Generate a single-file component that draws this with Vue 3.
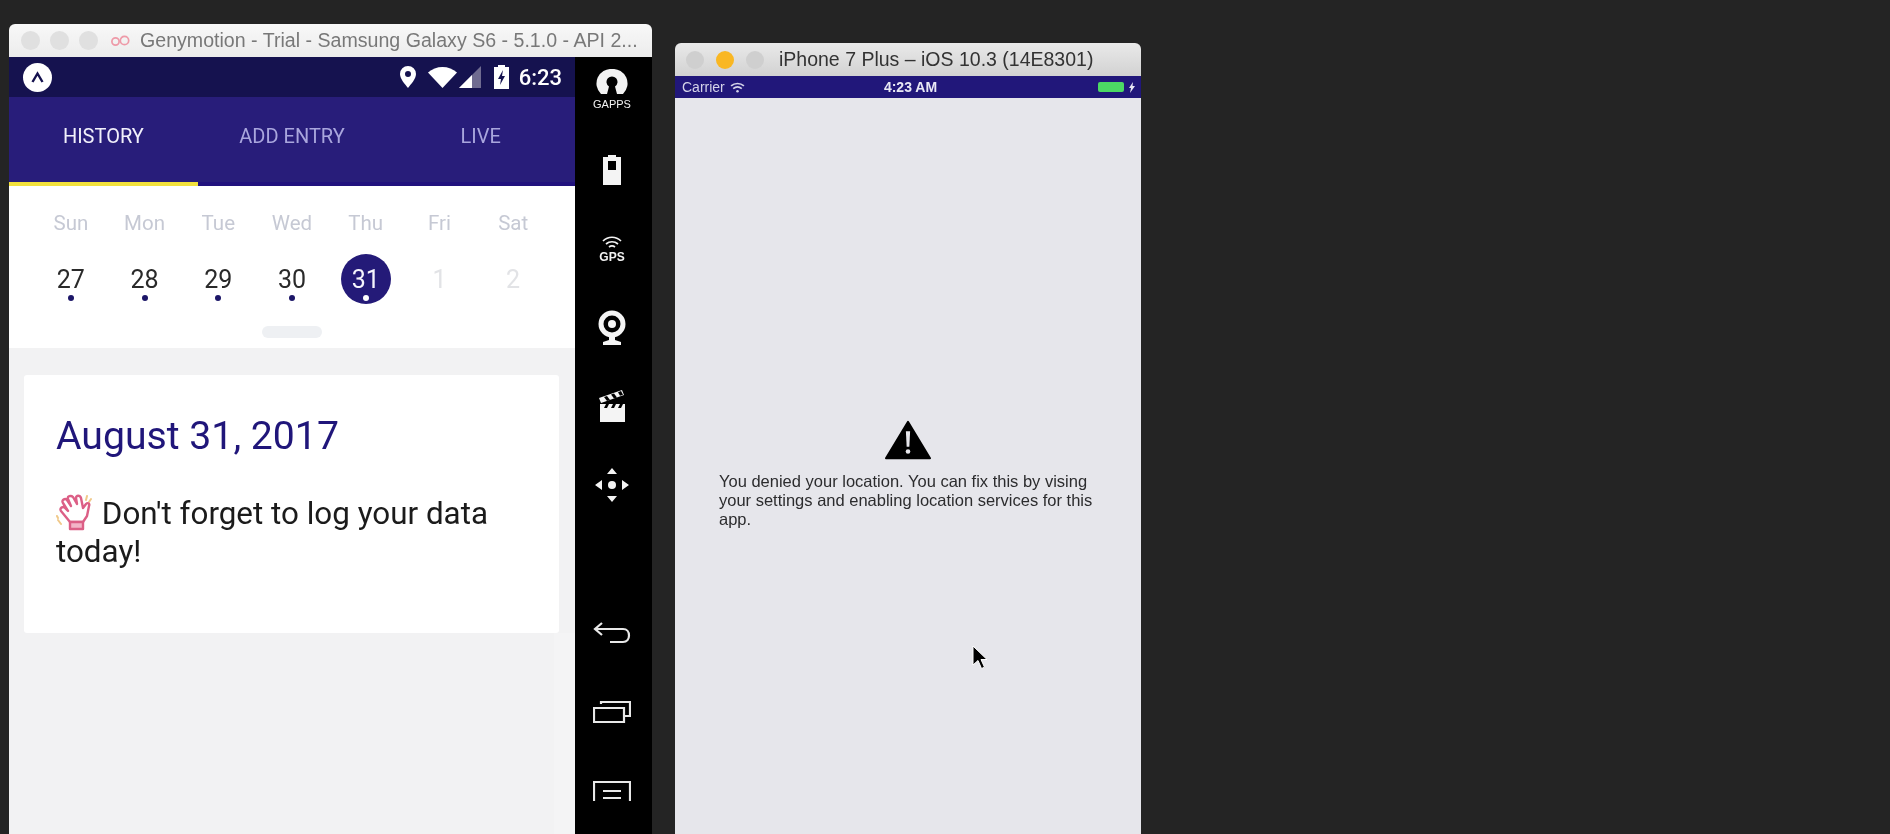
<script setup>
const tabs = ['HISTORY', 'ADD ENTRY', 'LIVE']

const days = [
  { name: 'Sun', date: 27, dot: true },
  { name: 'Mon', date: 28, dot: true },
  { name: 'Tue', date: 29, dot: true },
  { name: 'Wed', date: 30, dot: true },
  { name: 'Thu', date: 31, dot: true, selected: true },
  { name: 'Fri', date: 1, muted: true },
  { name: 'Sat', date: 2, muted: true }
]
</script>

<template>
  <div class="desktop">
    <section class="geny">
      <header class="geny-title">
        <span class="light"></span>
        <span class="light"></span>
        <span class="light"></span>
        <svg class="geny-logo" width="20" height="12" viewBox="0 0 20 12" fill="none" stroke="#ee9aa8" stroke-width="1.7">
          <circle cx="5.5" cy="6.5" r="3.6" />
          <circle cx="14.5" cy="5.5" r="4.2" />
        </svg>
        <span class="geny-text">Genymotion - Trial - Samsung Galaxy S6 - 5.1.0 - API 2...</span>
      </header>

      <div class="geny-body">
        <main class="android">
          <div class="android-status">
            <span class="expo">
              <svg width="15" height="12" viewBox="0 0 15 12" fill="none" stroke="#15124f" stroke-width="2.4">
                <path d="M2.5 11 7.5 2.5 12.5 11" />
              </svg>
            </span>
            <svg class="st-pin" width="16" height="22" viewBox="0 0 16 22">
              <path fill="#fff" fill-rule="evenodd" d="M8 0a8 8 0 0 1 8 8c0 5-5 10-8 14C5 18 0 13 0 8a8 8 0 0 1 8-8Zm0 5a3 3 0 1 0 0 6 3 3 0 0 0 0-6Z" />
            </svg>
            <svg class="st-wifi" width="29" height="21" viewBox="0 0 29 21">
              <path fill="#fff" d="M0 5.5C4 2 9 0 14.5 0S25 2 29 5.5L14.5 21Z" />
            </svg>
            <svg class="st-signal" width="22" height="22" viewBox="0 0 22 22">
              <path fill="#6f6b90" d="M22 0v22H0Z" />
              <path fill="#fff" d="M13 9v13H0Z" />
            </svg>
            <svg class="st-battery" width="15" height="24" viewBox="0 0 15 24">
              <path fill="#fff" d="M4 0h7v2h4v22H0V2h4Z" />
              <path fill="#15124f" d="M9 5 4 14h3l-1 6 5-9H8Z" />
            </svg>
            <span class="st-time">6:23</span>
          </div>

          <nav class="tabs">
            <span v-for="(tab, i) in tabs" :key="tab" class="tab" :class="{ active: i === 0 }">{{ tab }}</span>
          </nav>

          <div class="calendar">
            <div class="week">
              <div v-for="day in days" :key="day.name" class="day">
                <span class="day-name">{{ day.name }}</span>
                <span class="day-date" :class="{ selected: day.selected, muted: day.muted }">
                  {{ day.date }}
                  <i v-if="day.dot" class="dot"></i>
                </span>
              </div>
            </div>
            <div class="handle"></div>
          </div>

          <div class="feed">
            <article class="card">
              <h1 class="card-date">August 31, 2017</h1>
              <p class="card-text">
                <svg class="wave" width="36" height="38" viewBox="0 0 36 38" fill="none" stroke-linejoin="round" stroke-linecap="round">
                  <path stroke="#f0c98a" stroke-width="2" d="M2 27l3 4M1 23l1 2M31 3l-1 4M35 6l-2 3" />
                  <path fill="#fff" stroke="#dc5f86" stroke-width="2.4" d="M14 29 5 18c-2-3 2-5 4-3l3 3-5-8c-2-3 2-5 4-3l4 6-3-7c-1-3 3-4 5-2l4 7-1-6c0-3 4-3 5 0l2 10 3-4c2-2 4 0 3 2l-2 10-4 6Z" />
                  <path fill="#f3b5c8" stroke="#dc5f86" stroke-width="2.4" d="M14 29h13v7H14Z" />
                </svg>
                Don't forget to log your data today!
              </p>
            </article>
            <div class="feed-rest">
              <div class="feed-rest-inner"></div>
            </div>
          </div>
        </main>

        <aside class="sidebar">
          <div class="slot">
            <svg width="32" height="27" viewBox="0 0 32 27">
              <path fill="#f2f2f2" d="M16 0a14.500 14.500 0 0 1 11 25h-6l-2-7.500a5.500 5.500 0 1 0-6 0L11 25H5A14.500 14.500 0 0 1 16 0Z" />
            </svg>
            <span class="slot-label thin">GAPPS</span>
          </div>
          <div class="slot slot-battery">
            <svg width="18" height="30" viewBox="0 0 18 30">
              <path fill="#f4f4f4" fill-rule="evenodd" d="M5 0h8v2h5v28H0V2h5Zm0 6v9h8V6Z" />
            </svg>
          </div>
          <div class="slot slot-gps">
            <svg width="20" height="13" viewBox="0 0 20 13" fill="none" stroke="#f2f2f2" stroke-width="1.7">
              <path d="M1 5c5-5 13-5 18 0M4 8c3.500-3 8.500-3 12 0M7 11c2-1.500 4-1.500 6 0" />
            </svg>
            <span class="slot-label">GPS</span>
          </div>
          <div class="slot">
            <svg width="30" height="35" viewBox="0 0 30 35">
              <circle cx="15" cy="14" r="11" fill="none" stroke="#f4f4f4" stroke-width="5" />
              <circle cx="15" cy="14" r="4" fill="#f4f4f4" />
              <path fill="#f4f4f4" d="M12 26h6v4l6 2v3H6v-3l6-2Z" />
            </svg>
          </div>
          <div class="slot">
            <svg width="27" height="32" viewBox="0 0 27 32">
              <path fill="#f4f4f4" d="M1 14h25v18H1ZM0 8l23-8 2 5L2 13Z" />
              <path fill="#000" d="m5 7 3 4 3-1-3-4ZM12 4.500l3 4 3-1-3-4ZM19 2.200l2 3.500 3-1L22 1ZM7 14l-2 4h3l2-4ZM14 14l-2 4h3l2-4ZM21 14l-2 4h3l2-4Z" />
            </svg>
          </div>
          <div class="slot">
            <svg width="36" height="36" viewBox="0 0 36 36" fill="#f4f4f4">
              <circle cx="18" cy="18" r="4" />
              <path d="M18 1l5 6H13ZM18 35l-5-6h10ZM1 18l7-5v10ZM35 18l-7 5V13Z" />
            </svg>
          </div>

          <div class="slot slot-back">
            <svg width="38" height="22" viewBox="0 0 38 22" fill="none" stroke="#e8e8e8" stroke-width="2.200">
              <path d="M9 1 2 7l7 6M2 7h28c8 0 8 13 0 13H17" />
            </svg>
          </div>
          <div class="slot">
            <svg width="38" height="22" viewBox="0 0 38 22" fill="none" stroke="#e8e8e8" stroke-width="2.200">
              <path d="M1 7h30v14H1ZM8 3V1h29v14h-6" />
            </svg>
          </div>
          <div class="slot">
            <svg width="38" height="20" viewBox="0 0 38 20" fill="none" stroke="#e8e8e8" stroke-width="2.200">
              <path d="M1 20V1h36v19M10 10h18M10 17h18" />
            </svg>
          </div>
        </aside>
      </div>
    </section>

    <section class="iphone">
      <header class="iphone-title">
        <span class="light gray"></span>
        <span class="light yellow"></span>
        <span class="light gray"></span>
        <span class="iphone-text">iPhone 7 Plus – iOS 10.3 (14E8301)</span>
      </header>

      <div class="ios-status">
        <div class="ios-left">
          Carrier
          <svg width="15" height="11" viewBox="0 0 14 10" fill="none" stroke="#d4d3e8" stroke-width="1.600">
            <path d="M1 3.500c3.500-3 8.500-3 12 0M3 6c2.500-2 5.500-2 8 0" />
            <circle cx="7" cy="8.500" r="1.200" fill="#d4d3e8" stroke="none" />
          </svg>
        </div>
        <span class="ios-time">4:23 AM</span>
        <div class="ios-right">
          <span class="ios-battery"></span>
          <svg width="6" height="11" viewBox="0 0 6 11"><path fill="#e8e8f4" d="M4 0 0 6h2l-1 5 5-7H3.500Z" /></svg>
        </div>
      </div>

      <div class="ios-content">
        <svg class="warning" width="46" height="41" viewBox="0 0 48 41">
          <path fill="#000" stroke="#000" stroke-width="2" stroke-linejoin="round" d="M24 2 47 40H1Z" />
          <path fill="#e6e6eb" d="M21.800 12h4.400l-.8 16h-2.800Z" />
          <circle cx="24" cy="33" r="2.400" fill="#e6e6eb" />
        </svg>
        <p class="ios-message">You denied your location. You can fix this by vising your settings and enabling location services for this app.</p>
        <svg class="cursor" width="16" height="25" viewBox="0 0 16 25">
          <path fill="#000" stroke="#fff" stroke-width="1" d="M1 1v19l5-4.500 3.500 8 3-1.300-3.500-7.700h6Z" />
        </svg>
      </div>
    </section>
  </div>
</template>

<style scoped>
.desktop,
.desktop * {
  box-sizing: border-box;
}

.desktop {
  display: flex;
  align-items: flex-start;
  height: 834px;
  overflow: hidden;
  padding-left: 9px;
  background: #242424;
  font-family: "Liberation Sans", Arial, sans-serif;
  filter: blur(0.45px);
}

.geny {
  flex: none;
  width: 643px;
  margin-top: 24px;
}

.geny-title {
  display: flex;
  align-items: center;
  height: 33px;
  padding-left: 12px;
  border-radius: 6px 6px 0 0;
  background: linear-gradient(#f8f8f8, #ececec);
}

.light {
  flex: none;
  width: 19px;
  height: 19px;
  margin-right: 10px;
  border-radius: 50%;
  background: #e0e0e0;
}

.geny-logo {
  margin-left: 2px;
}

.geny-text {
  margin-left: 10px;
  color: #787878;
  font-size: 19.6px;
  white-space: nowrap;
}

.geny-body {
  display: flex;
  height: 777px;
}

.android {
  display: flex;
  flex-direction: column;
  flex: none;
  width: 566px;
  font-family: Roboto, sans-serif;
  background: #f2f2f3;
}

.android-status {
  display: flex;
  align-items: center;
  flex: none;
  height: 40px;
  padding: 0 13px 0 14px;
  background: #15124f;
}

.expo {
  display: flex;
  align-items: center;
  justify-content: center;
  width: 29px;
  height: 29px;
  border-radius: 50%;
  background: #fff;
}

.st-pin {
  margin-left: auto;
}

.st-wifi {
  margin-left: 12px;
}

.st-signal {
  margin-left: 2px;
}

.st-battery {
  margin-left: 13px;
}

.st-time {
  margin-left: 10px;
  color: #fff;
  font-size: 22px;
  font-weight: 500;
}

.tabs {
  display: grid;
  grid-template-columns: repeat(3, 1fr);
  flex: none;
  height: 89px;
  background: #281d7a;
  box-shadow: inset 0 -4px #21127d;
}

.tab {
  display: flex;
  align-items: center;
  justify-content: center;
  padding-bottom: 8px;
  border-bottom: 4px solid transparent;
  color: #a9a6dd;
  font-size: 20px;
}

.tab.active {
  color: #f1f0fb;
  border-bottom-color: #f2e13c;
}

.calendar {
  flex: none;
  height: 162px;
  padding: 0 25px;
  background: #fff;
}

.week {
  display: grid;
  grid-template-columns: repeat(7, 1fr);
}

.day {
  display: flex;
  flex-direction: column;
  align-items: center;
}

.day-name {
  margin-top: 25px;
  color: #c6c9d4;
  font-size: 20.5px;
  line-height: 24px;
}

.day-date {
  position: relative;
  display: flex;
  align-items: center;
  justify-content: center;
  width: 50px;
  height: 50px;
  margin-top: 19px;
  border-radius: 50%;
  color: #2a2a2a;
  font-size: 25px;
}

.day-date.muted {
  color: #e2e3e6;
}

.day-date.selected {
  color: #f5f4fc;
  background: #241a78;
}

.dot {
  position: absolute;
  left: 22px;
  bottom: 3px;
  width: 6px;
  height: 6px;
  border-radius: 50%;
  background: #1c1668;
}

.selected .dot {
  background: #fff;
}

.handle {
  width: 60px;
  height: 12px;
  margin: 22px auto 0;
  border-radius: 6px;
  background: #eef0f3;
}

.feed {
  display: flex;
  flex-direction: column;
  flex: 1;
  padding: 27px 16px 0 15px;
}

.card {
  flex: none;
  height: 258px;
  padding: 37px 32px 0 32px;
  border-radius: 3px;
  background: #fff;
}

.card-date {
  margin: 0;
  color: #20167a;
  font-size: 39.2px;
  font-weight: 400;
  line-height: 48px;
}

.card-text {
  margin: 33px 0 0;
  color: #1b1b1b;
  font-size: 31.4px;
  line-height: 38px;
}

.wave {
  margin: 0 2px -7px 0;
}

.feed-rest {
  flex: 1;
  margin: 0 -16px 0 -15px;
  padding-right: 21px;
  background: #f4f4f5;
}

.feed-rest-inner {
  height: 100%;
  background: #f2f2f3;
}

.sidebar {
  display: flex;
  flex-direction: column;
  gap: 13px;
  flex: none;
  width: 77px;
  padding-right: 3px;
  background: #000;
}

.slot {
  display: flex;
  flex-direction: column;
  align-items: center;
  justify-content: center;
  flex: none;
  height: 66px;
}

.slot-battery {
  padding-top: 2px;
}

.slot-gps {
  padding-top: 3px;
}

.slot-back {
  margin-top: 69px;
}

.slot-label {
  margin-top: 2px;
  color: #f2f2f2;
  font-size: 12px;
  font-weight: 700;
  line-height: 13px;
}

.slot-label.thin {
  font-size: 11px;
  font-weight: 400;
}

.iphone {
  position: relative;
  flex: none;
  width: 466px;
  margin: 43px 0 0 23px;
}

.iphone-title {
  display: flex;
  align-items: center;
  height: 33px;
  padding-left: 11px;
  border-radius: 6px 6px 0 0;
  background: linear-gradient(#e9e9e9, #d2d2d2);
}

.iphone-title .light {
  width: 18px;
  height: 18px;
  margin-right: 12px;
}

.light.gray {
  background: #cfcfcf;
}

.light.yellow {
  background: #f9b723;
}

.iphone-text {
  margin-left: 3px;
  color: #333;
  font-size: 19.500px;
  white-space: nowrap;
}

.ios-status {
  display: grid;
  grid-template-columns: 1fr auto 1fr;
  align-items: center;
  height: 22px;
  padding: 0 6px 0 7px;
  background: #21177a;
  color: #d4d3e8;
  font-size: 14px;
}

.ios-left {
  display: flex;
  align-items: center;
  gap: 5px;
}

.ios-time {
  padding-left: 4px;
  color: #e8e8f4;
  font-weight: 700;
}

.ios-right {
  display: flex;
  align-items: center;
  justify-content: flex-end;
  gap: 5px;
}

.ios-battery {
  width: 26px;
  height: 10px;
  border-radius: 2px;
  background: #4cd964;
}

.ios-content {
  position: relative;
  height: 736px;
  padding: 321px 44px 0;
  background: #e6e6eb;
}

.warning {
  display: block;
  margin: 0 auto;
}

.ios-message {
  margin: 12px 0 0;
  color: #2c2c2e;
  font-size: 16.500px;
  line-height: 19px;
}

.cursor {
  position: absolute;
  left: 297px;
  top: 547px;
}
</style>
